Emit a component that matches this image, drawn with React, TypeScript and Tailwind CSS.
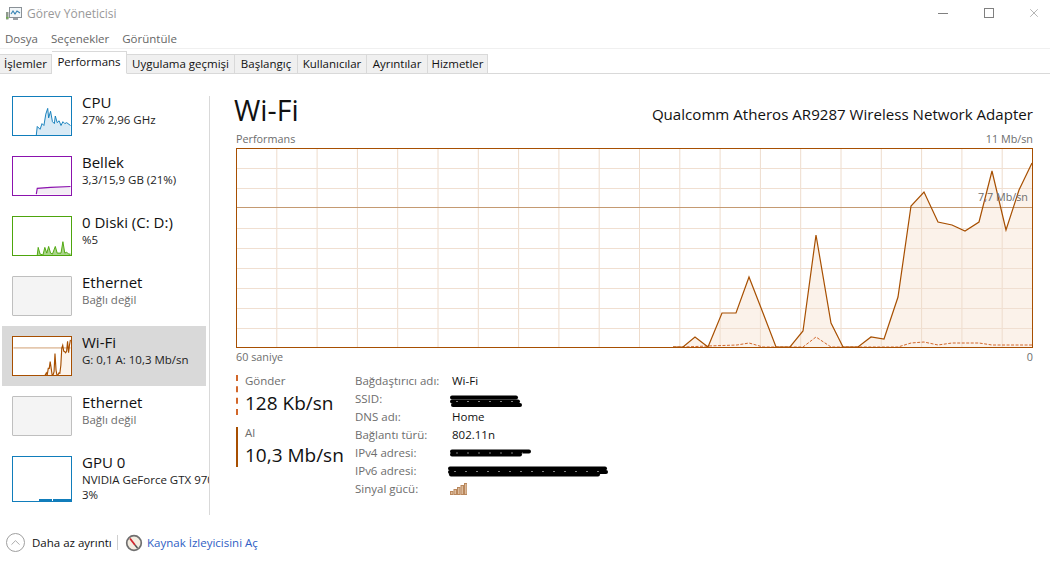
import { X, ChevronUp } from 'lucide-react';

// chart data in page pixels, chart box starts at 236,148
const RECV: [number, number][] = [
  [673, 347], [683, 347], [695, 337], [708, 347], [722, 313], [736, 313], [749, 277], [763, 313], [776, 347], [790, 347],
  [803, 331], [816, 235], [831, 323], [843, 347], [858, 347], [871, 337], [884, 339], [898, 297], [911, 206], [924, 192],
  [938, 222], [952, 225], [965, 231], [979, 222], [992, 171], [1006, 230], [1019, 190], [1032, 163],
];
const SEND: [number, number][] = [
  [673, 347], [683, 347], [708, 346], [737, 345], [749, 343], [763, 347], [776, 347], [803, 347], [816, 337], [831, 347],
  [843, 347], [858, 347], [871, 347], [898, 347], [911, 343], [924, 342], [938, 345], [952, 343], [979, 343], [992, 345], [1032, 345],
];
const VLINES = Array.from({ length: 19 }, (_, i) => 236.5 + 40.3 * (i + 1));
const HLINES = [168.5, 188.5, 228.5, 248.5, 268.5, 288.5, 308.5, 328.5];

const toPts = (p: [number, number][]) => p.map(([x, y]) => `${x},${y}`).join(' ');
const toThumb = (p: [number, number][]) =>
  p.map(([x, y]) => `${((x - 236) * 60) / 797},${((y - 148) * 40) / 200}`).join(' ');

function CpuThumb() {
  const pts = '24,40 25,31 28,34 30,28 32,30 34,18 36,12 37,22 39,15 41,26 43,28 44,20 46,27 48,25 50,30 52,26 54,28 56,27 60,30';
  return (
    <svg viewBox="0 0 60 40" className="w-full h-full">
      <polygon points={`${pts} 60,40`} fill="#d9eaf5" />
      <polyline points={pts} fill="none" stroke="#117dbb" strokeWidth="1" />
    </svg>
  );
}

function MemThumb() {
  const pts = '24,39 25,33 39,32 60,31';
  return (
    <svg viewBox="0 0 60 40" className="w-full h-full">
      <polygon points={`${pts} 60,40`} fill="#f3edf5" />
      <polyline points={pts} fill="none" stroke="#8b12ae" strokeWidth="1.2" />
    </svg>
  );
}

function DiskThumb() {
  const pts = '25,40 26,32 28,39 31,40 33,32 35,38 37,31 39,38 41,39 44,31 46,38 50,38 52,26 54,38 56,37 58,39 60,39';
  return (
    <svg viewBox="0 0 60 40" className="w-full h-full">
      <polygon points={`${pts} 60,40`} fill="#a9d48a" />
      <polyline points={pts} fill="none" stroke="#4da60c" strokeWidth="1" />
    </svg>
  );
}

function WifiThumb() {
  const pts = toThumb(RECV);
  return (
    <svg viewBox="0 0 60 40" className="w-full h-full bg-white">
      <polygon points={`${pts} 60,40 33,40`} fill="#fcf3eb" />
      <line x1="0" y1="11.5" x2="60" y2="11.5" stroke="#cf9a6a" strokeWidth="1" />
      <polyline points={pts} fill="none" stroke="#a74f01" strokeWidth="1.2" />
    </svg>
  );
}

function GpuThumb() {
  return (
    <svg viewBox="0 0 58 44" className="w-full h-full">
      <line x1="26" y1="43" x2="39" y2="43" stroke="#117dbb" strokeWidth="2" />
      <line x1="40" y1="43" x2="58" y2="43" stroke="#117dbb" strokeWidth="2" />
    </svg>
  );
}

function SideItem({ name, lines, border, muted, active, tall, children }: {
  name: string;
  lines: string[];
  border: string;
  muted?: boolean;
  active?: boolean;
  tall?: boolean;
  children?: React.ReactNode;
}) {
  return (
    <div className={`w-[204px] h-[60px] flex gap-[10px] pl-[10px] pt-[10px] ${active ? 'bg-[#d9d9d9]' : ''}`}>
      <div className={`w-[60px] ${tall ? 'h-[46px]' : 'h-[40px]'} shrink-0 border ${border} ${muted ? 'bg-[#f4f4f4] rounded-[1px]' : 'bg-white'}`}>
        {children}
      </div>
      <div className="-mt-[3px] whitespace-nowrap">
        <div className="text-[15px] leading-[19px] text-[#111]">{name}</div>
        {lines.map((l) => (
          <div key={l} className={`text-[11.5px] leading-[15px] ${muted ? 'text-[#6d6d6d]' : 'text-[#222]'}`}>{l}</div>
        ))}
      </div>
    </div>
  );
}

// black marker strokes over the redacted values
function Scribble({ w, h, rows }: { w: number; h: number; rows: [number, number, number][] }) {
  return (
    <svg width={w} height={h} viewBox={`0 0 ${w} ${h}`} className="block">
      {rows.map(([y, x1, x2], i) => (
        <line key={i} x1={x1} y1={y} x2={x2} y2={y} stroke="#000" strokeWidth="4" strokeLinecap="round" />
      ))}
      <line x1="6" y1={h / 2} x2={w - 8} y2={h / 2} stroke="#fff" strokeWidth="0.5" strokeDasharray="2 9" />
    </svg>
  );
}

const TABS = [
  { label: 'İşlemler', w: 'w-[52px]' },
  { label: 'Performans', w: 'w-[75px]', active: true },
  { label: 'Uygulama geçmişi', w: 'w-[108px]' },
  { label: 'Başlangıç', w: 'w-[63px]' },
  { label: 'Kullanıcılar', w: 'w-[69px]' },
  { label: 'Ayrıntılar', w: 'w-[61px]' },
  { label: 'Hizmetler', w: 'w-[60px]' },
];

const DETAILS: { label: string; value?: string; extra?: React.ReactNode }[] = [
  { label: 'Bağdaştırıcı adı:', value: 'Wi-Fi' },
  {
    label: 'SSID:',
    extra: <div className="mt-[4px] -ml-[2px]"><Scribble w={72} h={13} rows={[[2.5, 2, 66], [6.5, 2, 68], [10, 3, 70]]} /></div>,
  },
  { label: 'DNS adı:', value: 'Home' },
  { label: 'Bağlantı türü:', value: '802.11n' },
  {
    label: 'IPv4 adresi:',
    extra: <div className="-ml-[2px]"><Scribble w={81} h={8} rows={[[2.5, 2, 79], [5.5, 2, 70]]} /></div>,
  },
  {
    label: 'IPv6 adresi:',
    extra: <div className="-ml-[4px]"><Scribble w={160} h={11} rows={[[2.5, 2, 157], [6, 2, 158], [8.5, 3, 150]]} /></div>,
  },
  {
    label: 'Sinyal gücü:',
    extra: (
      <svg width="17" height="12" viewBox="0 0 17 12" className="block -ml-[2px]">
        {[0, 3.5, 7, 10.5, 14].map((x, i) => (
          <rect key={x} x={x + 0.5} y={8.5 - i * 2} width="2.5" height={3 + i * 2} fill="#dcbb9c" stroke="#b9875c" strokeWidth="1" />
        ))}
      </svg>
    ),
  },
];

export default function App() {
  return (
    <div className="w-[1050px] h-[562px] overflow-hidden bg-white flex flex-col font-['Open_Sans',sans-serif] text-[11.5px]">
      {/* title bar */}
      <div className="h-[28px] flex items-center shrink-0">
        <svg width="18" height="16" viewBox="0 0 18 16" className="ml-[5px]">
          <rect x="1" y="6" width="2.5" height="7.5" fill="#8f9a8e" />
          <rect x="1" y="11" width="2.5" height="1.5" fill="#6fae4e" />
          <rect x="4.5" y="1.5" width="12" height="10" fill="#f2f6f8" stroke="#8a9197" />
          <polyline points="6,8 8,5 10,8 12,5 15,7" fill="none" stroke="#3b86b5" strokeWidth="1.2" />
          <rect x="8" y="12" width="5" height="2" fill="#9aa0a5" />
        </svg>
        <span className="ml-[4px] text-[#999] text-[12px]">Görev Yöneticisi</span>
        <div className="ml-auto flex items-center pb-[2px]">
          <div className="w-[10px] h-px bg-[#808080]" />
          <div className="w-[10px] h-[10px] border border-[#808080] ml-[36px]" />
          <X size={14} strokeWidth={1} className="ml-[33px] mr-[9px] text-[#808080]" />
        </div>
      </div>

      {/* menu */}
      <div className="h-[18px] flex items-center gap-[13px] pl-[5px] pt-[2px] text-[#666] border-b border-[#f0f0f0] shrink-0 box-content">
        <span>Dosya</span>
        <span>Seçenekler</span>
        <span>Görüntüle</span>
      </div>

      {/* tabs */}
      <div className="h-[25px] flex items-end border-b border-[#d9d9d9] shrink-0">
        {TABS.map((t) => (
          <div
            key={t.label}
            className={`${t.w} text-center whitespace-nowrap border-y border-r border-[#d9d9d9] text-[#111] ${
              t.active
                ? 'h-[23px] bg-white border-b-white relative z-10 -mb-px leading-[20px]'
                : 'h-[19px] bg-[#f0f0f0] border-b-0 leading-[18px]'
            }`}
          >
            {t.label}
          </div>
        ))}
      </div>

      {/* main */}
      <div className="flex-1 flex min-h-0">
        <div className="w-[209px] pl-[2px] pt-[12px] overflow-hidden shrink-0">
          <SideItem name="CPU" lines={['27%  2,96 GHz']} border="border-[#117dbb]"><CpuThumb /></SideItem>
          <SideItem name="Bellek" lines={['3,3/15,9 GB (21%)']} border="border-[#8b12ae]"><MemThumb /></SideItem>
          <SideItem name="0 Diski (C: D:)" lines={['%5']} border="border-[#4da60c]"><DiskThumb /></SideItem>
          <SideItem name="Ethernet" lines={['Bağlı değil']} border="border-[#bfbfbf]" muted />
          <SideItem name="Wi-Fi" lines={['G: 0,1  A: 10,3 Mb/sn']} border="border-[#a74f01]" active><WifiThumb /></SideItem>
          <SideItem name="Ethernet" lines={['Bağlı değil']} border="border-[#bfbfbf]" muted />
          <SideItem name="GPU 0" lines={['NVIDIA GeForce GTX 970', '3%']} border="border-[#117dbb]" tall><GpuThumb /></SideItem>
        </div>
        <div className="w-px h-[419px] mt-[22px] bg-[#d9d9d9] shrink-0" />

        <div className="flex-1 pl-[26px] pr-[17px]">
          <div className="h-[54px] flex justify-between">
            <div className="text-[28.5px] leading-[36px] mt-[18px] -ml-[2px] text-[#111]">Wi-Fi</div>
            <div className="text-[15.1px] leading-[20px] mt-[30px] text-[#111]">Qualcomm Atheros AR9287 Wireless Network Adapter</div>
          </div>
          <div className="h-[20px] flex justify-between items-end pb-[2px] text-[#6d6d6d] text-[10.8px] leading-[14px]">
            <span>Performans</span>
            <span>11 Mb/sn</span>
          </div>

          <div className="relative w-[797px] h-[200px]">
            <svg width="797" height="200" viewBox="236 148 797 200" className="block">
              <polygon points={`${toPts(RECV)} 1032,348 673,348`} fill="#fbf2ea" />
              {VLINES.map((x) => (
                <line key={x} x1={x} y1="148" x2={x} y2="348" stroke="#eedccc" strokeWidth="1" />
              ))}
              {HLINES.map((y) => (
                <line key={y} x1="236" y1={y} x2="1033" y2={y} stroke="#f0dfd1" strokeWidth="1" />
              ))}
              <line x1="236" y1="207.5" x2="1033" y2="207.5" stroke="#c49a72" strokeWidth="1" />
              <polyline points={toPts(SEND)} fill="none" stroke="#d2672a" strokeWidth="1" strokeDasharray="3 1.5" />
              <polyline points={toPts(RECV)} fill="none" stroke="#a74f01" strokeWidth="1.2" />
              <rect x="236.5" y="148.5" width="796" height="199" fill="none" stroke="#a74f01" strokeWidth="1" />
            </svg>
            <span className="absolute right-[5px] top-[42px] text-[#6d6d6d] text-[10.8px] leading-[14px]">7,7 Mb/sn</span>
          </div>

          <div className="h-[18px] flex justify-between items-center text-[#6d6d6d] text-[10.8px]">
            <span>60 saniye</span>
            <span>0</span>
          </div>

          <div className="flex mt-[9px]">
            <div className="w-[119px] shrink-0">
              <div className="h-[40px] border-l-2 border-dashed border-[#d2672a] pl-[7px]">
                <div className="text-[#6d6d6d] leading-[12px]">Gönder</div>
                <div className="text-[19px] leading-[26px] mt-[3px] text-[#111] whitespace-nowrap">128 Kb/sn</div>
              </div>
              <div className="h-[40px] mt-[12px] border-l-2 border-[#a74f01] pl-[7px]">
                <div className="text-[#6d6d6d] leading-[12px]">Al</div>
                <div className="text-[19px] leading-[26px] mt-[3px] text-[#111] whitespace-nowrap">10,3 Mb/sn</div>
              </div>
            </div>
            <div className="flex flex-col -mt-[3px]">
              {DETAILS.map((d) => (
                <div key={d.label} className="h-[18px] flex items-center">
                  <span className="w-[97px] text-[#6d6d6d]">{d.label}</span>
                  {d.value ? <span className="text-[#111]">{d.value}</span> : d.extra}
                </div>
              ))}
            </div>
          </div>
        </div>
      </div>

      {/* footer */}
      <div className="h-[37px] flex items-center pl-[6px] pb-[2px] shrink-0">
        <div className="w-[19px] h-[19px] rounded-full border border-[#a0a0a0] flex items-center justify-center text-[#909090]">
          <ChevronUp size={15} strokeWidth={1.2} />
        </div>
        <span className="ml-[7px] w-[85px] text-[#111] whitespace-nowrap">Daha az ayrıntı</span>
        <div className="w-px h-[15px] bg-[#cfcfcf]" />
        <svg width="18" height="18" viewBox="0 0 18 18" className="ml-[7px]">
          <circle cx="9" cy="9" r="7.3" fill="#f3ece0" stroke="#6f6f6f" strokeWidth="1.7" />
          <line x1="5" y1="4.5" x2="10" y2="11" stroke="#d0262e" strokeWidth="1.8" />
          <line x1="10" y1="11" x2="12.5" y2="14" stroke="#555" strokeWidth="1.6" />
        </svg>
        <span className="ml-[4px] text-[#2f5ec4] whitespace-nowrap">Kaynak İzleyicisini Aç</span>
      </div>
    </div>
  );
}
